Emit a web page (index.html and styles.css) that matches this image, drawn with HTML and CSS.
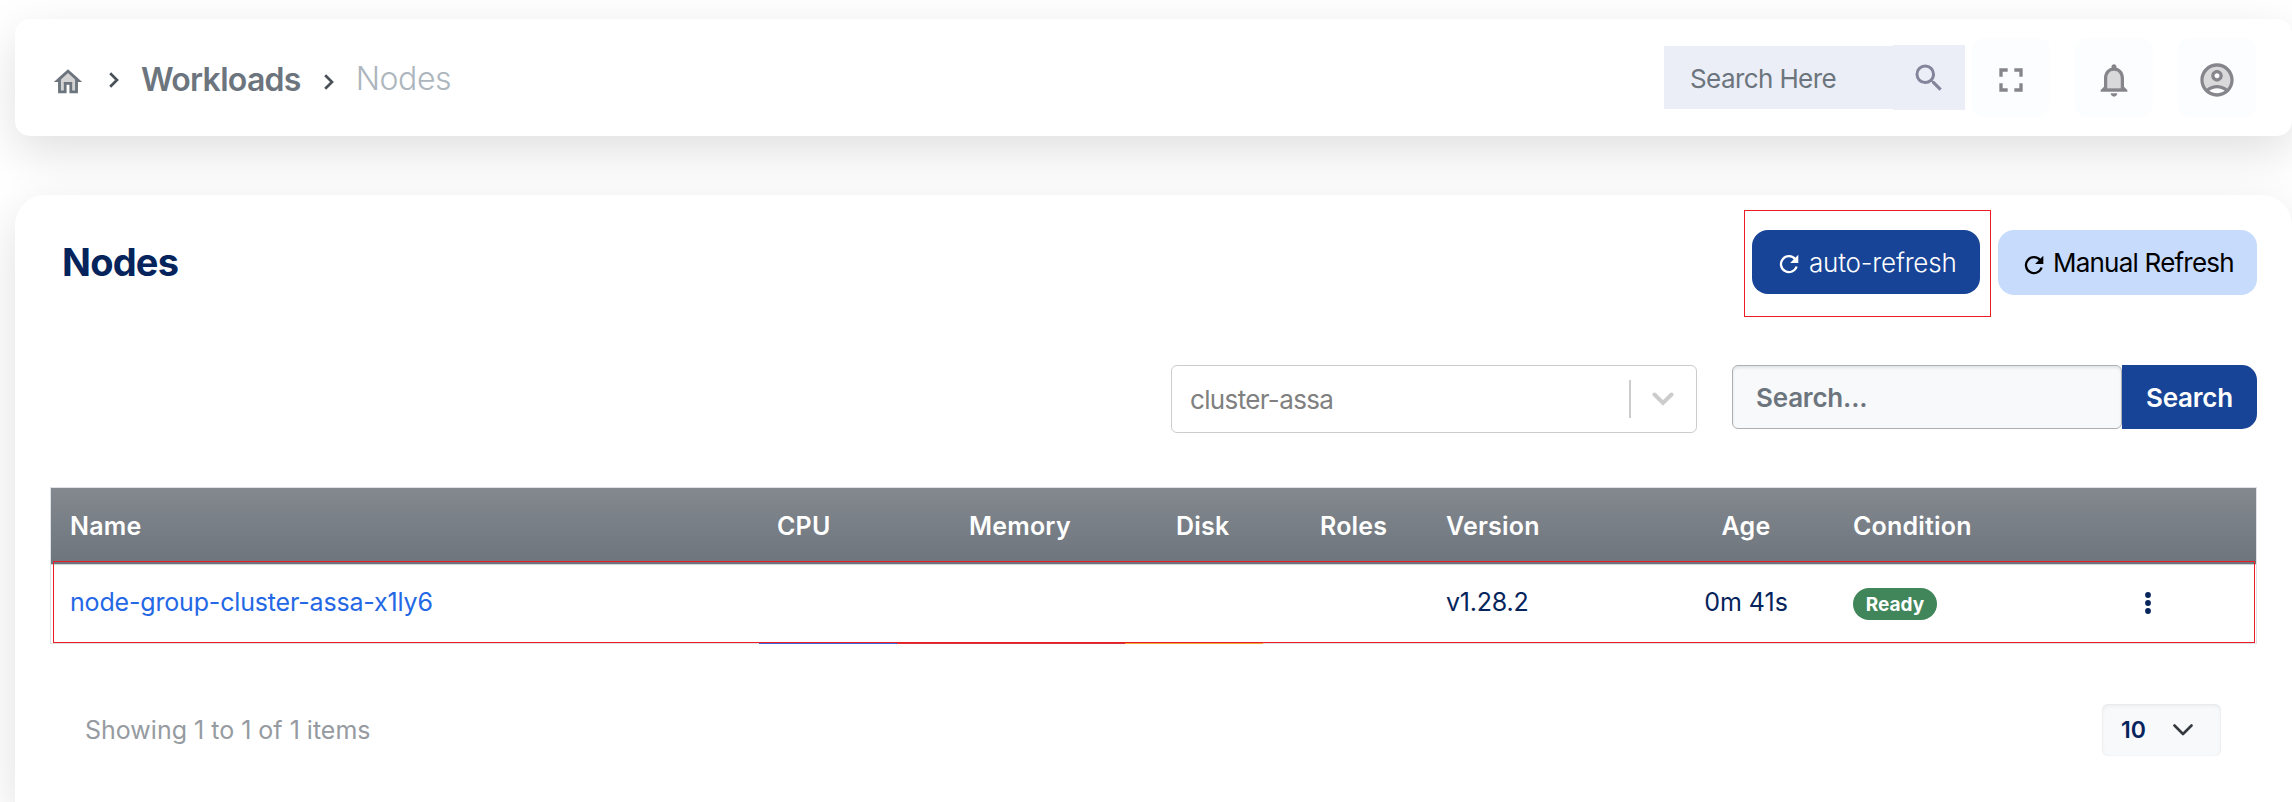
FILE: index.html
```html
<!DOCTYPE html>
<html lang="en">
<head>
<meta charset="utf-8">
<title>Nodes</title>
<link rel="stylesheet" href="styles.css">
</head>
<body>
<header class="topbar">
  <nav class="crumbs">
    <svg class="home" viewBox="0 0 24 24"><path d="M5 9v10h4v-6h6v6h4V9l-7-5z" fill="#d3d3d3"/><path d="M12 3L2 12h3v8h6v-6h2v6h6v-8h3L12 3zm5 15h-2v-6H9v6H7v-7.81l5-4.500 5 4.500V18z" fill="#6c757d"/></svg>
    <svg class="sep sep1" viewBox="0 0 10 16"><path d="M1.200 1.200 8 8l-6.800 6.800"/></svg>
    <a class="crumb">Workloads</a>
    <svg class="sep sep2" viewBox="0 0 10 16"><path d="M1.200 1.200 8 8l-6.800 6.800"/></svg>
    <span class="current">Nodes</span>
  </nav>
  <div class="tools">
    <div class="finder">
      <div class="finder-input">Search Here</div>
      <div class="finder-btn"><svg viewBox="0 0 24 24"><path d="M9.500 3A6.500 6.500 0 0 1 16 9.500c0 1.610-.59 3.090-1.560 4.230l.27.27h.79l5 5-1.500 1.500-5-5v-.79l-.27-.27A6.516 6.516 0 0 1 9.500 16 6.500 6.500 0 0 1 3 9.500 6.500 6.500 0 0 1 9.500 3m0 2C7 5 5 7 5 9.500S7 14 9.500 14 14 12 14 9.500 12 5 9.500 5z"/></svg></div>
    </div>
    <div class="tool"><svg viewBox="0 0 24 24"><path d="M7 14H5v5h5v-2H7v-3zm-2-4h2V7h3V5H5v5zm12 7h-3v2h5v-5h-2v3zM14 5v2h3v3h2V5h-5z" fill="#86858b"/></svg></div>
    <div class="tool"><svg viewBox="0 0 24 24"><path d="M12 6.500c-2.490 0-4 2.020-4 4.500v6h8v-6c0-2.480-1.510-4.500-4-4.500z" fill="#d9d9db"/><path d="M12 22c1.100 0 2-.9 2-2h-4c0 1.100.9 2 2 2zm6-6v-5c0-3.070-1.630-5.640-4.500-6.320V4c0-.83-.67-1.500-1.500-1.500s-1.500.67-1.500 1.500v.68C7.640 5.360 6 7.920 6 11v5l-2 2v1h16v-1l-2-2zm-2 1H8v-6c0-2.480 1.510-4.500 4-4.500s4 2.020 4 4.500v6z" fill="#86858b"/></svg></div>
    <div class="tool"><svg viewBox="0 0 24 24"><path d="M12 4c-4.420 0-8 3.580-8 8 0 1.950.7 3.730 1.860 5.120C7.550 15.800 9.680 15 12 15s4.450.8 6.140 2.120C19.300 15.730 20 13.950 20 12c0-4.420-3.580-8-8-8zm0 9c-1.930 0-3.500-1.570-3.500-3.500S10.070 6 12 6s3.500 1.570 3.500 3.500S13.930 13 12 13z" fill="#d9d9db"/><path d="M12 2C6.480 2 2 6.480 2 12s4.480 10 10 10 10-4.480 10-10S17.520 2 12 2zM7.350 18.500C8.660 17.560 10.260 17 12 17s3.340.56 4.650 1.500C15.340 19.440 13.740 20 12 20s-3.340-.56-4.650-1.500zm10.790-1.380C16.450 15.800 14.320 15 12 15s-4.450.8-6.140 2.120C4.700 15.730 4 13.950 4 12c0-4.420 3.580-8 8-8s8 3.580 8 8c0 1.950-.7 3.730-1.860 5.120zM12 6c-1.930 0-3.500 1.570-3.500 3.500S10.070 13 12 13s3.500-1.570 3.500-3.500S13.930 6 12 6zm0 5c-.83 0-1.500-.67-1.500-1.500S11.170 8 12 8s1.500.67 1.500 1.500S12.830 11 12 11z" fill="#86858b"/></svg></div>
  </div>
</header>

<main class="panel">
  <div class="panel-head">
    <h1 class="title">Nodes</h1>
    <div class="actions">
      <button class="btn auto"><svg viewBox="0 0 20 20"><path d="M16.300 5.200A8 8 0 1 0 17.600 12.500" fill="none" stroke="currentColor" stroke-width="2.300"/><path d="M19.300.8v8.200h-8.200z" fill="currentColor"/></svg>auto-refresh</button>
      <button class="btn manual"><svg viewBox="0 0 20 20"><path d="M16.300 5.200A8 8 0 1 0 17.600 12.500" fill="none" stroke="currentColor" stroke-width="2.300"/><path d="M19.300.8v8.200h-8.200z" fill="currentColor"/></svg>Manual Refresh</button>
      <div class="mark mark-auto"></div>
    </div>
  </div>
  <div class="filters">
    <div class="select">
      <span class="select-value">cluster-assa</span>
      <span class="select-line"></span>
      <svg class="select-arrow" viewBox="0 0 22 14"><path d="M2.500 2.500 11 11l8.500-8.500"/></svg>
    </div>
    <div class="query">
      <div class="query-input">Search...</div>
      <button class="query-btn">Search</button>
    </div>
  </div>
  <div class="table">
    <div class="row head">
      <span>Name</span><span>CPU</span><span>Memory</span><span>Disk</span><span>Roles</span><span>Version</span><span class="age">Age</span><span>Condition</span><span></span>
    </div>
    <div class="row item">
      <a class="link">node-group-cluster-assa-x1ly6</a><span></span><span></span><span></span><span></span><span class="ver">v1.28.2</span><span class="age">0m 41s</span><span><span class="badge">Ready</span></span>
      <svg class="dots" viewBox="0 0 8 24"><circle cx="4" cy="4" r="2.900"/><circle cx="4" cy="12" r="2.900"/><circle cx="4" cy="20" r="2.900"/></svg>
    </div>
    <div class="usage"><i class="cpu"></i><i class="mem"></i><i class="disk"></i></div>
    <div class="mark mark-row"></div>
  </div>
  <div class="foot">
    <span class="count">Showing 1 to 1 of 1 items</span>
    <div class="size">10<svg viewBox="0 0 20 12"><path d="M1.500 1.500 10 10l8.500-8.500"/></svg></div>
  </div>
</main>
</body>
</html>
```
FILE: styles.css
```css
* { box-sizing: border-box; }
body { margin: 0; padding: 19px 0 0 15px; height: 802px; overflow: hidden; background: #fff; font-family: Inter, "Liberation Sans", sans-serif; color: #05245c; font-size: 25px; display: flex; flex-direction: column; }
svg { display: block; flex: none; }
button { border: 0; font: inherit; padding: 0; margin: 0; }

.topbar { position: relative; z-index: 1; flex: none; height: 117px; border-radius: 15px; background: #fff; box-shadow: 0 16px 48px rgba(0,0,0,.125); display: flex; justify-content: space-between; align-items: center; padding: 0 36px 0 35px; }
.crumbs { display: flex; align-items: center; font-size: 32px; line-height: 40px; padding-top: 4px; }
.home { width: 34px; height: 34px; margin: 4px 0 0 1px; }
.sep { width: 10px; height: 16px; fill: none; stroke: #495057; stroke-width: 2.7; }
.sep1 { margin: 0 22px 0 24px; }
.sep2 { margin: 4px 22px 0 23px; }
.crumb { font-weight: 600; color: #6c757d; letter-spacing: -.7px; }
.current { font-weight: 300; color: #adb5bd; margin-top: -2px; letter-spacing: -.45px; }
.tools { display: flex; align-items: center; gap: 25px; }
.finder { display: flex; align-items: center; margin-right: -18px; }
.finder-input { width: 229px; height: 63px; background: #ebeef7; color: #6c757d; font-size: 26px; line-height: 66px; padding-left: 26px; letter-spacing: -.6px; }
.finder-btn { width: 72px; height: 65px; background: #ebeef7; fill: #84849a; padding: 15px 0 0 18px; }
.finder-btn svg { width: 36px; height: 36px; }
.tool { width: 78px; height: 79px; border-radius: 12px; background: #fcfdfe; display: flex; align-items: center; justify-content: center; padding-top: 4px; }
.tool svg { width: 40px; height: 40px; }

.panel { margin-top: 59px; flex: 1; min-height: 0; border-radius: 30px 30px 0 0; background: #fff; box-shadow: 0 16px 48px rgba(0,0,0,.125); padding: 35px 35px 0 35px; }
.panel-head { display: flex; justify-content: space-between; height: 65px; }
.title { margin: 0 0 0 12px; font-size: 38px; font-weight: 700; line-height: 64px; color: #05245c; letter-spacing: -.8px; }
.actions { position: relative; display: flex; gap: 18px; align-items: flex-start; }
.btn { display: flex; align-items: center; border-radius: 16px; height: 64px; }
.btn svg { width: 20px; height: 20px; margin-top: 4px; }
.auto { width: 228px; background: #174496; color: #fff; padding: 1px 0 0 27px; gap: 10px; font-weight: 300; font-size: 26px; letter-spacing: -.2px; }
.auto svg { margin-top: 3px; }
.manual { width: 259px; height: 65px; background: #c7dbfc; color: #000; padding-left: 26px; gap: 9px; font-size: 26px; letter-spacing: -.78px; }
.mark { position: absolute; border: 1px solid #ed1c24; }
.mark-auto { left: -8px; top: -20px; width: 247px; height: 107px; }

.filters { display: flex; justify-content: flex-end; align-items: flex-start; gap: 35px; margin-top: 70px; }
.select { width: 526px; height: 68px; border: 1px solid #ccc; border-radius: 6px; display: flex; align-items: center; padding: 0 22px 0 18px; color: #808080; }
.select-value { flex: 1; font-size: 26px; line-height: 67px; letter-spacing: -.65px; }
.select-line { width: 2px; height: 38px; background: #ccc; margin-right: 21px; }
.select-arrow { width: 22px; height: 14px; fill: none; stroke: #ccc; stroke-width: 4; stroke-linecap: round; }
.query { display: flex; }
.query-input { width: 390px; height: 64px; border: 1px solid #adb0b3; border-radius: 6px; background: #f8f9fb; box-shadow: inset 0 2px 3px rgba(0,0,0,.09); color: #6c757d; font-weight: 600; font-size: 26px; line-height: 64px; padding-left: 23px; letter-spacing: -.2px; }
.query-btn { width: 135px; height: 64px; border-radius: 0 15px 15px 0; background: #174496; color: #fff; font-weight: 600; font-size: 26px; letter-spacing: -.2px; }

.table { position: relative; margin-top: 54px; width: 2207px; height: 157px; border: 1px solid #dee2e6; }
.row { display: grid; grid-template-columns: 707px 192px 207px 144px 126px 244px 163px 255px 78px; padding-left: 19px; align-items: center; }
.age { width: 112px; text-align: center; }
.head { height: 77px; background: linear-gradient(#84888f, #6d757c); color: #fff; font-weight: 600; line-height: 76px; letter-spacing: .2px; border-bottom: 1px solid #d3d6d9; }
.item { height: 75px; line-height: 75px; }
.item > * { display: block; }
.link { color: #2468e5; letter-spacing: -.17px; }
.ver { letter-spacing: -.2px; }
.badge { display: block; width: 84px; height: 32px; margin-top: 2px; border-radius: 16px; background: #41865a; color: #fff; font-weight: 700; font-size: 19px; line-height: 33px; text-align: center; }
.dots { width: 8px; height: 24px; margin: auto 34px auto 36px; fill: #05245c; }
.usage { position: absolute; left: 708px; top: 155px; height: 1px; display: flex; }
.cpu { width: 138px; background: #3b6bdb; }
.mem { width: 228px; background: #d1343f; }
.disk { width: 138px; background: #f2a93b; }
.mark-row { left: 2px; top: 73px; width: 2202px; height: 82px; }

.foot { display: flex; justify-content: space-between; align-items: center; margin-top: 60px; padding: 0 36px 0 35px; height: 52px; }
.count { color: #969ba1; }
.size { width: 119px; height: 52px; border-radius: 6px; background: #f8f9fb; box-shadow: inset 0 2px 4px rgba(0,0,0,.06), inset 0 0 2px rgba(0,0,0,.06); display: flex; align-items: center; justify-content: space-between; padding: 0 28px 0 19px; font-weight: 600; font-size: 23px; }
.size svg { width: 20px; height: 12px; fill: none; stroke: #343a40; stroke-width: 2.6; stroke-linecap: round; stroke-linejoin: round; }
```
